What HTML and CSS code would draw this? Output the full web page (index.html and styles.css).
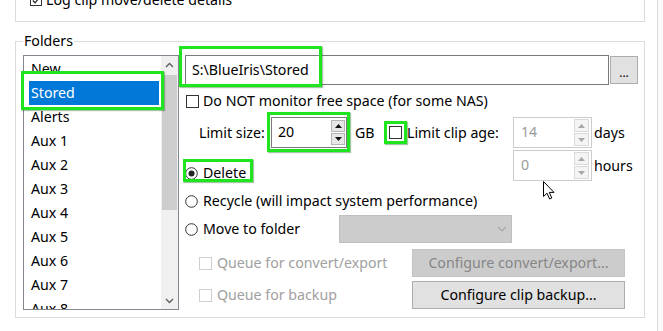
FILE: index.html
```html
<!DOCTYPE html>
<html>
<head>
<meta charset="utf-8">
<link rel="stylesheet" href="styles.css">
</head>
<body>
<div class="screen">
  <div class="main">
    <div class="top-group">
      <div class="row">
        <span class="cb"><svg width="11" height="11" viewBox="0 0 11 11"><polyline points="2,5.5 4.5,8 9,2.5" fill="none" stroke="#222" stroke-width="1.3"/></svg></span>
        <span class="lbl">Log clip move/delete details</span>
      </div>
    </div>
    <fieldset class="folders">
      <legend>Folders</legend>
      <div class="folders-body">
        <div class="listbox">
          <ul class="items">
            <li>New</li>
            <li class="sel">Stored</li>
            <li>Alerts</li>
            <li>Aux 1</li>
            <li>Aux 2</li>
            <li>Aux 3</li>
            <li>Aux 4</li>
            <li>Aux 5</li>
            <li>Aux 6</li>
            <li>Aux 7</li>
            <li>Aux 8</li>
          </ul>
          <div class="vscroll">
            <div class="sbtn"><svg width="9" height="6" viewBox="0 0 9 6"><polyline points="1,5 4.5,1.5 8,5" fill="none" stroke="#606060" stroke-width="1.4"/></svg></div>
            <div class="track"><div class="thumb"></div></div>
            <div class="sbtn"><svg width="9" height="6" viewBox="0 0 9 6"><polyline points="1,1 4.5,4.5 8,1" fill="none" stroke="#606060" stroke-width="1.4"/></svg></div>
          </div>
        </div>
        <div class="panel">
          <div class="path-row">
            <div class="textbox">S:\BlueIris\Stored</div>
            <div class="btn browse">...</div>
          </div>
          <div class="row nas">
            <span class="cb"></span>
            <span class="lbl">Do NOT monitor free space (for some NAS)</span>
          </div>
          <div class="limits">
            <div class="limit-left">
              <span class="size-lbl">Limit size:</span>
              <div class="spin">
                <span class="val">20</span>
                <div class="spin-btns">
                  <span class="sb"><svg width="7" height="4" viewBox="0 0 7 4"><polygon points="0,4 3.5,0 7,4" fill="#111"/></svg></span>
                  <span class="sb"><svg width="7" height="4" viewBox="0 0 7 4"><polygon points="0,0 3.5,4 7,0" fill="#111"/></svg></span>
                </div>
              </div>
              <span class="unit-gb">GB</span>
              <span class="cb"></span>
              <span class="age-lbl">Limit clip age:</span>
            </div>
            <div class="limit-right">
              <div class="spin off days">
                <span class="val">14</span>
                <div class="spin-btns">
                  <span class="sb"><svg width="7" height="4" viewBox="0 0 7 4"><polygon points="0,4 3.5,0 7,4" fill="#a8a8a8"/></svg></span>
                  <span class="sb"><svg width="7" height="4" viewBox="0 0 7 4"><polygon points="0,0 3.5,4 7,0" fill="#a8a8a8"/></svg></span>
                </div>
              </div>
              <span class="unit">days</span>
            </div>
            <div class="row delete">
              <span class="rb"><svg width="13" height="13" viewBox="0 0 13 13"><circle cx="6.5" cy="6.5" r="5.8" fill="#fff" stroke="#333" stroke-width="1"/><circle cx="6.5" cy="6.5" r="3" fill="#222"/></svg></span>
              <span class="lbl">Delete</span>
            </div>
            <div class="limit-right">
              <div class="spin off">
                <span class="val">0</span>
                <div class="spin-btns">
                  <span class="sb"><svg width="7" height="4" viewBox="0 0 7 4"><polygon points="0,4 3.5,0 7,4" fill="#a8a8a8"/></svg></span>
                  <span class="sb"><svg width="7" height="4" viewBox="0 0 7 4"><polygon points="0,0 3.5,4 7,0" fill="#a8a8a8"/></svg></span>
                </div>
              </div>
              <span class="unit">hours</span>
            </div>
          </div>
          <div class="row recycle">
            <span class="rb"><svg width="13" height="13" viewBox="0 0 13 13"><circle cx="6.5" cy="6.5" r="5.8" fill="#fff" stroke="#333" stroke-width="1"/></svg></span>
            <span class="lbl">Recycle (will impact system performance)</span>
          </div>
          <div class="row move">
            <div class="move-lbl">
              <span class="rb"><svg width="13" height="13" viewBox="0 0 13 13"><circle cx="6.5" cy="6.5" r="5.8" fill="#fff" stroke="#333" stroke-width="1"/></svg></span>
              <span class="lbl">Move to folder</span>
            </div>
            <div class="combo"><svg width="10" height="6" viewBox="0 0 10 6"><polyline points="1,1 5,5 9,1" fill="none" stroke="#a6a6a6" stroke-width="1.1"/></svg></div>
          </div>
          <div class="row queue first">
            <div class="queue-lbl">
              <span class="cb off"></span>
              <span class="lbl">Queue for convert/export</span>
            </div>
            <div class="btn wide off">Configure convert/export...</div>
          </div>
          <div class="row queue">
            <div class="queue-lbl">
              <span class="cb off"></span>
              <span class="lbl">Queue for backup</span>
            </div>
            <div class="btn wide">Configure clip backup...</div>
          </div>
        </div>
      </div>
    </fieldset>
  </div>
  <div class="edge"></div>

  <div class="mark m-path"></div>
  <div class="mark m-stored"></div>
  <div class="mark m-size"></div>
  <div class="mark m-age"></div>
  <div class="mark m-delete"></div>
  <svg class="cursor" width="13" height="19" viewBox="0 0 13 19"><path d="M0.5,0.5 L0.5,15.5 L4,12.2 L6.6,18 L8.8,17 L6.3,11.4 L11,11.4 Z" fill="#fff" stroke="#000" stroke-width="1" stroke-linejoin="miter"/></svg>
</div>
</body>
</html>
```
FILE: styles.css
```css
* { box-sizing: border-box; }
html, body { margin: 0; padding: 0; }
body {
  width: 663px;
  height: 331px;
  overflow: hidden;
  background: #fff;
  font-family: "Noto Sans", "Open Sans", sans-serif;
  font-size: 14.2px;
  color: #000;
}
.screen { position: relative; display: flex; height: 331px; }
.main { width: 657px; }
.edge { flex: 1; border-left: 1px solid #dcdcdc; background: #fafafa; }

.row { display: flex; align-items: center; height: 20px; line-height: 20px; white-space: nowrap; }

.cb {
  width: 13px; height: 13px; flex: none;
  border: 1px solid #333; background: #fff;
  display: flex; align-items: center; justify-content: center;
}
.cb.off { border-color: #cfcfcf; }
.rb { width: 13px; height: 13px; flex: none; display: flex; }

.top-group {
  margin: -10px 0 0 15px;
  width: 630px; height: 32px;
  border: 1px solid #dcdcdc; border-top: none;
  padding-left: 14px;
}
.top-group .cb { width: 12px; height: 12px; }
.top-group .lbl { margin-left: 4px; }

.folders {
  margin: 9px 0 0 15px;
  width: 630px;
  border: 1px solid #dcdcdc;
  padding: 4px 7px 7px 7px;
  min-width: 0;
}
.folders legend { padding: 0 1px; line-height: 20px; height: 20px; }
.folders-body { display: flex; gap: 6px; }

.listbox {
  width: 156px; height: 255px; flex: none;
  border: 1px solid #828790;
  display: flex;
  padding-left: 5px;
}
.items {
  list-style: none; margin: 0; padding: 1px 0 0 0;
  width: 130px; overflow: hidden;
}
.items li { height: 24px; line-height: 24px; padding-left: 2px; }
.items li.sel { background: #0078d7; color: #fff; }
.vscroll {
  margin-left: 2px;
  width: 17px; background: #f0f0f0;
  display: flex; flex-direction: column;
}
.sbtn { height: 17px; display: flex; align-items: center; justify-content: center; flex: none; }
.track { flex: 1; padding: 2px 1px 0 1px; }
.thumb { height: 135px; background: #cdcdcd; }

.panel { width: 453px; display: flex; flex-direction: column; }
.path-row { display: flex; gap: 1px; height: 30px; }
.textbox {
  width: 424px; height: 30px;
  border: 1px solid #7a7a7a;
  padding-left: 6px; line-height: 27px;
}
.btn {
  background: #e1e1e1; border: 1px solid #adadad;
  display: flex; align-items: center; justify-content: center;
  white-space: nowrap;
}
.browse { width: 28px; height: 28px; margin-top: 1px; font-size: 12px; line-height: 1; padding-top: 6px; }

.nas { margin-top: 6px; }
.nas .cb { margin-left: 1px; }
.nas .lbl { margin-left: 4px; }

.limits {
  margin-top: 6px;
  display: grid;
  grid-template-columns: 328px 1fr;
  grid-template-rows: 31px 31px;
  row-gap: 2px;
}
.limit-left { display: flex; align-items: center; white-space: nowrap; }
.size-lbl { width: 86px; padding-left: 14px; }
.spin {
  width: 76px; height: 31px; flex: none;
  border: 1px solid #7a7a7a;
  display: flex; align-items: stretch;
}
.spin .val { flex: 1; padding-left: 6px; line-height: 28px; }
.spin-btns { width: 15px; display: flex; flex-direction: column; gap: 1px; padding: 2px 1px 2px 0; }
.sb {
  flex: 1; background: #e6e6e6; border: 1px solid #b4b4b4;
  display: flex; align-items: center; justify-content: center;
}
.unit-gb { width: 34px; margin-left: 8px; }
.age-lbl { margin-left: 5px; }

.limit-right { display: flex; align-items: center; white-space: nowrap; }
.spin.off { width: 79px; border-color: #cccccc; color: #9b9b9b; }
.spin.off .val { padding-left: 7px; }
.spin.off .spin-btns { width: 18px; padding: 1px 2px 1px 1px; }
.spin.off .sb { background: #f4f4f4; border-color: #dadada; }
.unit { margin-left: 2px; }

.delete { align-self: end; margin-bottom: -2px; }
.delete .lbl, .recycle .lbl, .move .lbl { margin-left: 5px; }

.recycle { margin-top: 10px; }
.move { margin-top: 4px; height: 28px; }
.move-lbl { width: 154px; display: flex; align-items: center; }
.combo {
  width: 173px; height: 28px;
  background: #cccccc; border: 1px solid #bfbfbf;
  display: flex; align-items: center; justify-content: flex-end;
  padding-right: 4px;
}

.queue { height: 28px; margin-top: 4px; }
.queue.first { margin-top: 6px; }
.queue-lbl { width: 227px; display: flex; align-items: center; padding-left: 14px; color: #a0a0a0; }
.queue-lbl .lbl { margin-left: 5px; }
.btn.wide { width: 213px; height: 28px; }
.btn.wide.off { background: #cccccc; border-color: #c4c4c4; color: #868686; }

.mark {
  position: absolute;
  border: 3px solid #1fe51f;
  box-shadow: 1px 1px 1px rgba(0, 90, 0, 0.35);
}
.m-path { left: 179px; top: 46px; width: 143px; height: 41px; }
.m-stored { left: 21px; top: 71px; width: 143px; height: 39px; }
.m-size { left: 267px; top: 112px; width: 83px; height: 40px; }
.m-age { left: 384px; top: 121px; width: 23px; height: 23px; }
.m-delete { left: 183px; top: 159px; width: 70px; height: 23px; }
.cursor { position: absolute; left: 543px; top: 181px; }
```
